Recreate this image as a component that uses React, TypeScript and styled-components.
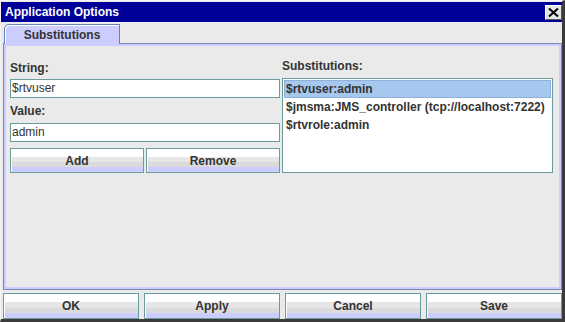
import React from "react";
import styled, { createGlobalStyle } from "styled-components";

const GlobalStyle = createGlobalStyle`
  html, body {
    margin: 0;
    padding: 0;
    background: #eaeaea;
  }
  body {
    font-family: "Liberation Sans", Arial, sans-serif;
    font-size: 12px;
    color: #333333;
  }
`;

const Frame = styled.div`
  box-sizing: border-box;
  width: 565px;
  height: 322px;
  background: #eaeaea;
  border-top: 1px solid #f4f4f4;
  border-left: 1px solid #f4f4f4;
  border-right: 3px solid #3a3a3a;
  border-bottom: 3px solid #3a3a3a;
  display: flex;
  flex-direction: column;
  overflow: hidden;
`;

const TitleBar = styled.div`
  height: 20px;
  background: #000099;
  display: flex;
  align-items: center;
  justify-content: space-between;
  padding: 0 0 0 4px;
  margin-top: 1px;
`;

const Title = styled.span`
  color: #ffffff;
  font-weight: bold;
  font-size: 12px;
`;

const CloseButton = styled.div`
  box-sizing: border-box;
  width: 17px;
  height: 15px;
  background: #e4e4e4;
  border: 1px solid;
  border-color: #ffffff #555555 #555555 #ffffff;
  display: flex;
  align-items: center;
  justify-content: center;
`;

const Body = styled.div`
  flex: 1;
  display: flex;
  flex-direction: column;
  padding: 2px 0 0 2px;
`;

const TabStrip = styled.div`
  display: flex;
  padding-left: 1px;
  height: 19px;
  position: relative;
  z-index: 1;
`;

const Tab = styled.div`
  box-sizing: border-box;
  width: 116px;
  height: 20px;
  background: #ccccff;
  border: 1px solid #6382bf;
  border-bottom: none;
  border-top-left-radius: 5px;
  box-shadow: inset 1px 1px 0 #ffffff;
  display: flex;
  align-items: center;
  justify-content: center;
  font-weight: bold;
`;

const Panel = styled.div`
  box-sizing: border-box;
  width: 559px;
  height: 247px;
  border: 1px solid #7a8ab8;
  box-shadow: inset 0 0 0 2px #ccccff;
  display: grid;
  grid-template-columns: 270px 271px;
  column-gap: 2px;
  padding: 17px 0 0 6px;
  align-content: start;
`;

const Column = styled.div<{ $raise?: number }>`
  display: flex;
  flex-direction: column;
  margin-top: ${(p) => -(p.$raise ?? 0)}px;
`;

const Label = styled.div<{ $height?: number }>`
  font-weight: bold;
  height: ${(p) => p.$height ?? 18}px;
  line-height: 14px;
`;

const TextField = styled.div`
  box-sizing: border-box;
  height: 19px;
  background: #ffffff;
  border: 1px solid #6a9c9c;
  padding: 0 1px;
  line-height: 17px;
  margin-bottom: 6px;
`;

const ButtonRow = styled.div`
  display: grid;
  grid-template-columns: 134px 134px;
  column-gap: 2px;
`;

const Button = styled.div<{ $height?: number }>`
  box-sizing: border-box;
  height: ${(p) => p.$height ?? 25}px;
  border: 1px solid #6a9c9c;
  background: linear-gradient(
    to bottom,
    #ffffff 0%,
    #ffffff 33%,
    #e6e6e6 33%,
    #e6e6e6 58%,
    #dadada 58%,
    #dadada 80%,
    #ccccff 80%,
    #ccccff 100%
  );
  box-shadow: inset 1px 1px 0 #ffffff;
  display: flex;
  align-items: center;
  justify-content: center;
  font-weight: bold;
  color: #333333;
`;

const List = styled.div`
  box-sizing: border-box;
  height: 95px;
  background: #ffffff;
  border: 1px solid #6a9c9c;
  padding: 1px;
`;

const ListItem = styled.div<{ $selected?: boolean }>`
  height: 18px;
  line-height: 16px;
  padding-left: 1px;
  font-weight: bold;
  white-space: nowrap;
  background: ${(p) => (p.$selected ? "#a6c8ee" : "transparent")};
  border: 1px solid ${(p) => (p.$selected ? "#8fb0d8" : "transparent")};
  box-sizing: border-box;
`;

const Footer = styled.div`
  display: grid;
  grid-template-columns: repeat(4, 136px);
  column-gap: 5px;
  padding: 3px 0 0 0;
`;

const substitutions = [
  "$rtvuser:admin",
  "$jmsma:JMS_controller (tcp://localhost:7222)",
  "$rtvrole:admin",
];

export default function App() {
  return (
    <>
      <GlobalStyle />
      <Frame>
        <TitleBar>
          <Title>Application Options</Title>
          <CloseButton>
            <svg width="11" height="9" viewBox="0 0 11 9">
              <path d="M1 0.5 L10 8.5 M10 0.5 L1 8.5" stroke="#000" strokeWidth="2" />
            </svg>
          </CloseButton>
        </TitleBar>
        <Body>
          <TabStrip>
            <Tab>Substitutions</Tab>
          </TabStrip>
          <Panel>
            <Column>
              <Label>String:</Label>
              <TextField>$rtvuser</TextField>
              <Label $height={19}>Value:</Label>
              <TextField>admin</TextField>
              <ButtonRow>
                <Button>Add</Button>
                <Button>Remove</Button>
              </ButtonRow>
            </Column>
            <Column $raise={2}>
              <Label $height={19}>Substitutions:</Label>
              <List>
                {substitutions.map((s, i) => (
                  <ListItem key={s} $selected={i === 0}>
                    {s}
                  </ListItem>
                ))}
              </List>
            </Column>
          </Panel>
          <Footer>
            <Button $height={26}>OK</Button>
            <Button $height={26}>Apply</Button>
            <Button $height={26}>Cancel</Button>
            <Button $height={26}>Save</Button>
          </Footer>
        </Body>
      </Frame>
    </>
  );
}
